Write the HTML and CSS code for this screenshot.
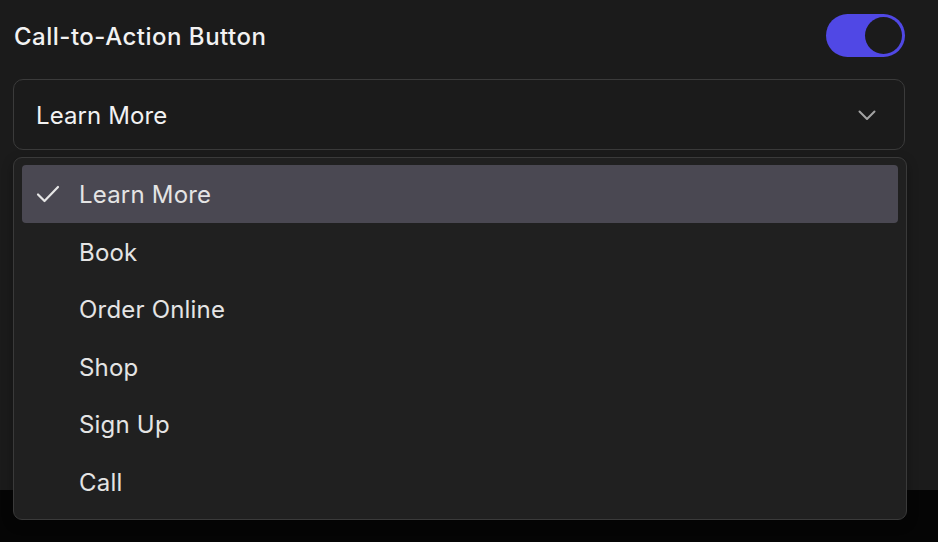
FILE: index.html
```html
<!DOCTYPE html>
<html>
<head>
<meta charset="utf-8">
<link rel="stylesheet" href="styles.css">
</head>
<body>
<div class="panel">
  <div class="header">
    <span class="title">Call-to-Action Button</span>
    <div class="toggle"><div class="knob"></div></div>
  </div>
  <div class="select">
    <span class="value">Learn More</span>
    <svg class="chev" width="18" height="11" viewBox="0 0 18 11"><path d="M1.5 1.5 L9 9 L16.5 1.5" fill="none" stroke="#a3a3a3" stroke-width="2" stroke-linecap="round" stroke-linejoin="round"/></svg>
  </div>
  <div class="menu">
    <div class="item active">
      <svg class="check" width="24" height="20" viewBox="0 0 24 20"><path d="M2 10.5 L8.5 17 L22 3" fill="none" stroke="#e6e6e6" stroke-width="2.2" stroke-linecap="round" stroke-linejoin="round"/></svg>
      <span>Learn More</span>
    </div>
    <div class="item"><span>Book</span></div>
    <div class="item"><span>Order Online</span></div>
    <div class="item"><span>Shop</span></div>
    <div class="item"><span>Sign Up</span></div>
    <div class="item"><span>Call</span></div>
  </div>
</div>
</body>
</html>
```
FILE: styles.css
```css
html, body {
  margin: 0;
  padding: 0;
  background: #050505;
  font-family: Inter, "Noto Sans", sans-serif;
  width: 938px;
  height: 542px;
  overflow: hidden;
}
.panel {
  position: relative;
  height: 490px;
  background: #1b1b1b;
  padding: 14px 33px 0 13px;
  box-sizing: border-box;
}
.header {
  display: flex;
  align-items: center;
  justify-content: space-between;
  height: 43px;
}
.title {
  color: #f2f2f2;
  font-size: 24px;
  font-weight: 500;
  letter-spacing: 0.5px;
  padding-left: 1px;
  padding-top: 2px;
}
.toggle {
  width: 79px;
  height: 43px;
  border-radius: 22px;
  background: #5048e5;
  padding: 3px;
  box-sizing: border-box;
  display: flex;
  justify-content: flex-end;
}
.knob {
  width: 37px;
  height: 37px;
  border-radius: 50%;
  background: #1b1b1b;
}
.select {
  margin-top: 22px;
  height: 71px;
  border: 1px solid #3b3b3b;
  border-radius: 10px;
  box-sizing: border-box;
  display: flex;
  align-items: center;
  justify-content: space-between;
  padding: 0 28px 0 22px;
  background: #1b1b1b;
}
.value {
  color: #f2f2f2;
  font-size: 24px;
  letter-spacing: 0.1px;
  padding-top: 2px;
}
.chev {
  display: block;
  margin-top: 1px;
}
.menu {
  position: absolute;
  left: 13px;
  top: 157px;
  width: 894px;
  box-sizing: border-box;
  background: #202020;
  border: 1px solid #3a3a3a;
  border-radius: 9px;
  padding: 7px 8px 9px;
  box-shadow: 0 4px 12px rgba(0,0,0,0.3);
}
.item {
  height: 57.5px;
  display: flex;
  align-items: center;
  padding-left: 57px;
  padding-top: 2px;
  box-sizing: border-box;
  position: relative;
  color: #e4e4e4;
  font-size: 24px;
  letter-spacing: 0.2px;
  border-radius: 4px;
}
.item.active {
  background: #4a4852;
}
.check {
  position: absolute;
  left: 14px;
  top: 19px;
}
```
